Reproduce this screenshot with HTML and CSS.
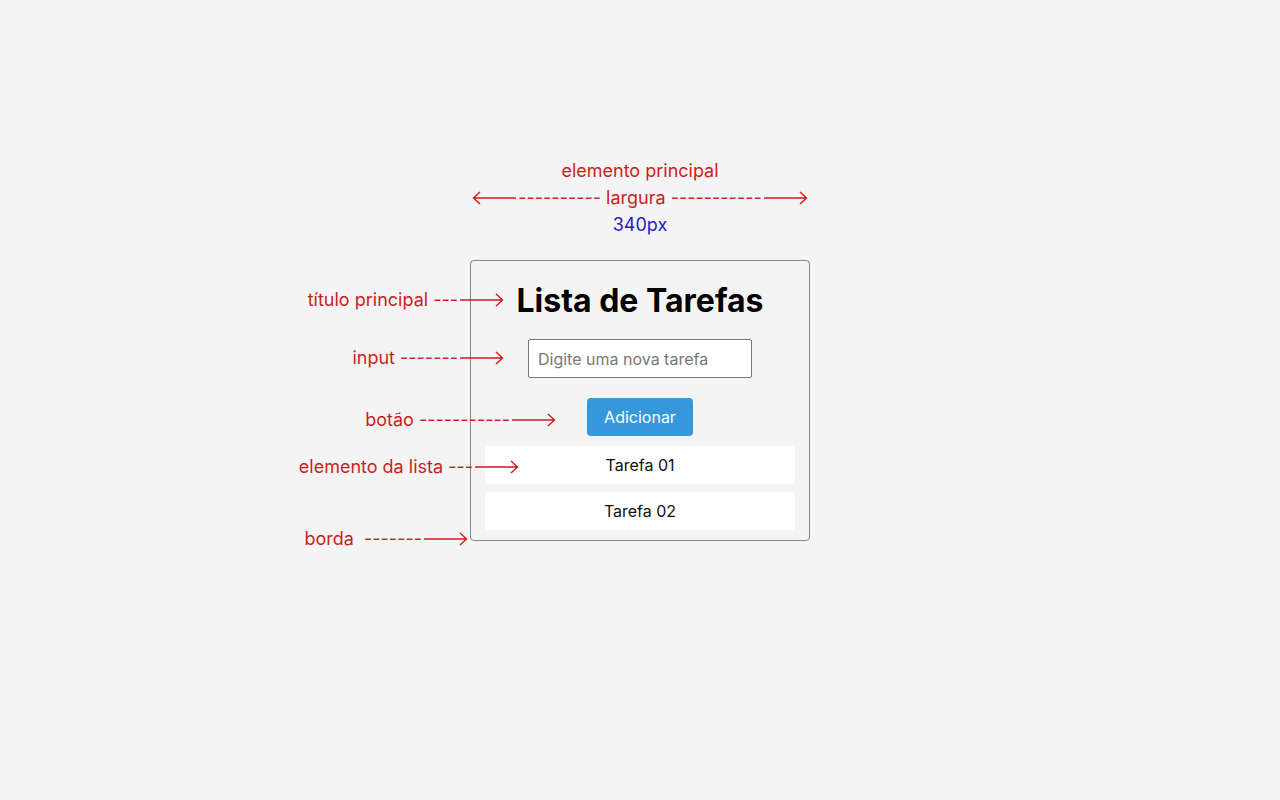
FILE: index.html
```html
<!DOCTYPE html>
<html lang="pt-BR">
<head>
<meta charset="utf-8">
<title>Lista de Tarefas</title>
<link rel="stylesheet" href="styles.css">
</head>
<body>
<div class="canvas">
  <div class="width-note">
    <div class="note-line">elemento principal</div>
    <div class="note-line measure">
      <svg class="arrow" width="44" height="14" viewBox="0 0 44 14"><path d="M44 7H1M8 1L1.5 7L8 13"/></svg>
      <span class="dashes">---------- largura -----------</span>
      <svg class="arrow" width="44" height="14" viewBox="0 0 44 14"><path d="M0 7H43M36 1L42.5 7L36 13"/></svg>
    </div>
    <div class="note-line size">340px</div>
  </div>

  <main class="card">
    <h1 class="title">Lista de Tarefas</h1>
    <input class="task-input" type="text" placeholder="Digite uma nova tarefa">
    <button class="add-btn" type="button">Adicionar</button>
    <ul class="task-list">
      <li class="task">Tarefa 01</li>
      <li class="task">Tarefa 02</li>
    </ul>
  </main>

  <div class="label label-title"><span class="dashes">título principal ---</span><svg class="arrow" width="44" height="14" viewBox="0 0 44 14"><path d="M0 7H43M36 1L42.5 7L36 13"/></svg></div>
  <div class="label label-input"><span class="dashes">input -------</span><svg class="arrow" width="44" height="14" viewBox="0 0 44 14"><path d="M0 7H43M36 1L42.5 7L36 13"/></svg></div>
  <div class="label label-btn"><span class="dashes">botão -----------</span><svg class="arrow" width="44" height="14" viewBox="0 0 44 14"><path d="M0 7H43M36 1L42.5 7L36 13"/></svg></div>
  <div class="label label-item"><span class="dashes">elemento da lista ---</span><svg class="arrow" width="44" height="14" viewBox="0 0 44 14"><path d="M0 7H43M36 1L42.5 7L36 13"/></svg></div>
  <div class="label label-border"><span class="dashes">borda  -------</span><svg class="arrow" width="44" height="14" viewBox="0 0 44 14"><path d="M0 7H43M36 1L42.5 7L36 13"/></svg></div>
</div>
</body>
</html>
```

FILE: styles.css
```css
* { box-sizing: border-box; }

html, body {
  margin: 0;
  padding: 0;
  background: #f4f4f4;
  font-family: Inter, "Noto Sans", sans-serif;
}

.canvas {
  position: relative;
  width: 1280px;
  height: 800px;
  padding-top: 157px;
  display: flex;
  flex-direction: column;
  align-items: center;
}

.width-note {
  display: flex;
  flex-direction: column;
  align-items: center;
  color: #cc1d1d;
  font-size: 18px;
  margin-bottom: 22px;
}

.note-line {
  height: 27px;
  line-height: 27px;
  white-space: pre;
}

.measure {
  display: flex;
  align-items: center;
}

.measure .dashes {
  padding: 0 2px;
}

.size {
  color: #2a17c6;
}

.arrow {
  display: block;
  flex: none;
  fill: none;
  stroke: #cc1d1d;
  stroke-width: 1.4;
}

.dashes {
  white-space: pre;
}

.card {
  width: 340px;
  border: 1px solid #858585;
  border-radius: 4px;
  padding: 21px 14px 10px;
  display: flex;
  flex-direction: column;
  align-items: center;
  background: #f4f4f4;
}

.title {
  margin: 0;
  font-size: 32px;
  line-height: 38px;
  font-weight: 700;
  color: #000;
}

.task-input {
  margin-top: 19px;
  width: 224px;
  height: 39px;
  border: 1px solid #777;
  border-radius: 2px;
  padding: 0 9px;
  font-family: inherit;
  font-size: 16px;
  color: #222;
  background: #fff;
}

.task-input::placeholder {
  color: #777;
}

.add-btn {
  margin-top: 20px;
  height: 38px;
  padding: 0 17px;
  border: none;
  border-radius: 4px;
  background: #3498db;
  color: #fff;
  font-family: inherit;
  font-size: 16px;
}

.task-list {
  list-style: none;
  margin: 10px 0 0;
  padding: 0;
  width: 100%;
  display: flex;
  flex-direction: column;
  gap: 8px;
}

.task {
  height: 38px;
  line-height: 38px;
  background: #fff;
  border-radius: 4px;
  text-align: center;
  font-size: 16px;
  color: #111;
}

/* annotation labels pointing at card parts */
.label {
  position: absolute;
  display: flex;
  align-items: center;
  height: 24px;
  line-height: 24px;
  font-size: 18px;
  color: #cc1d1d;
}

.label .dashes {
  padding-right: 2px;
}

.label-title  { top: 288px; right: 776px; }
.label-input  { top: 346px; right: 776px; }
.label-btn    { top: 408px; right: 724px; }
.label-item   { top: 455px; right: 761px; }
.label-border { top: 527px; right: 812px; }
```
